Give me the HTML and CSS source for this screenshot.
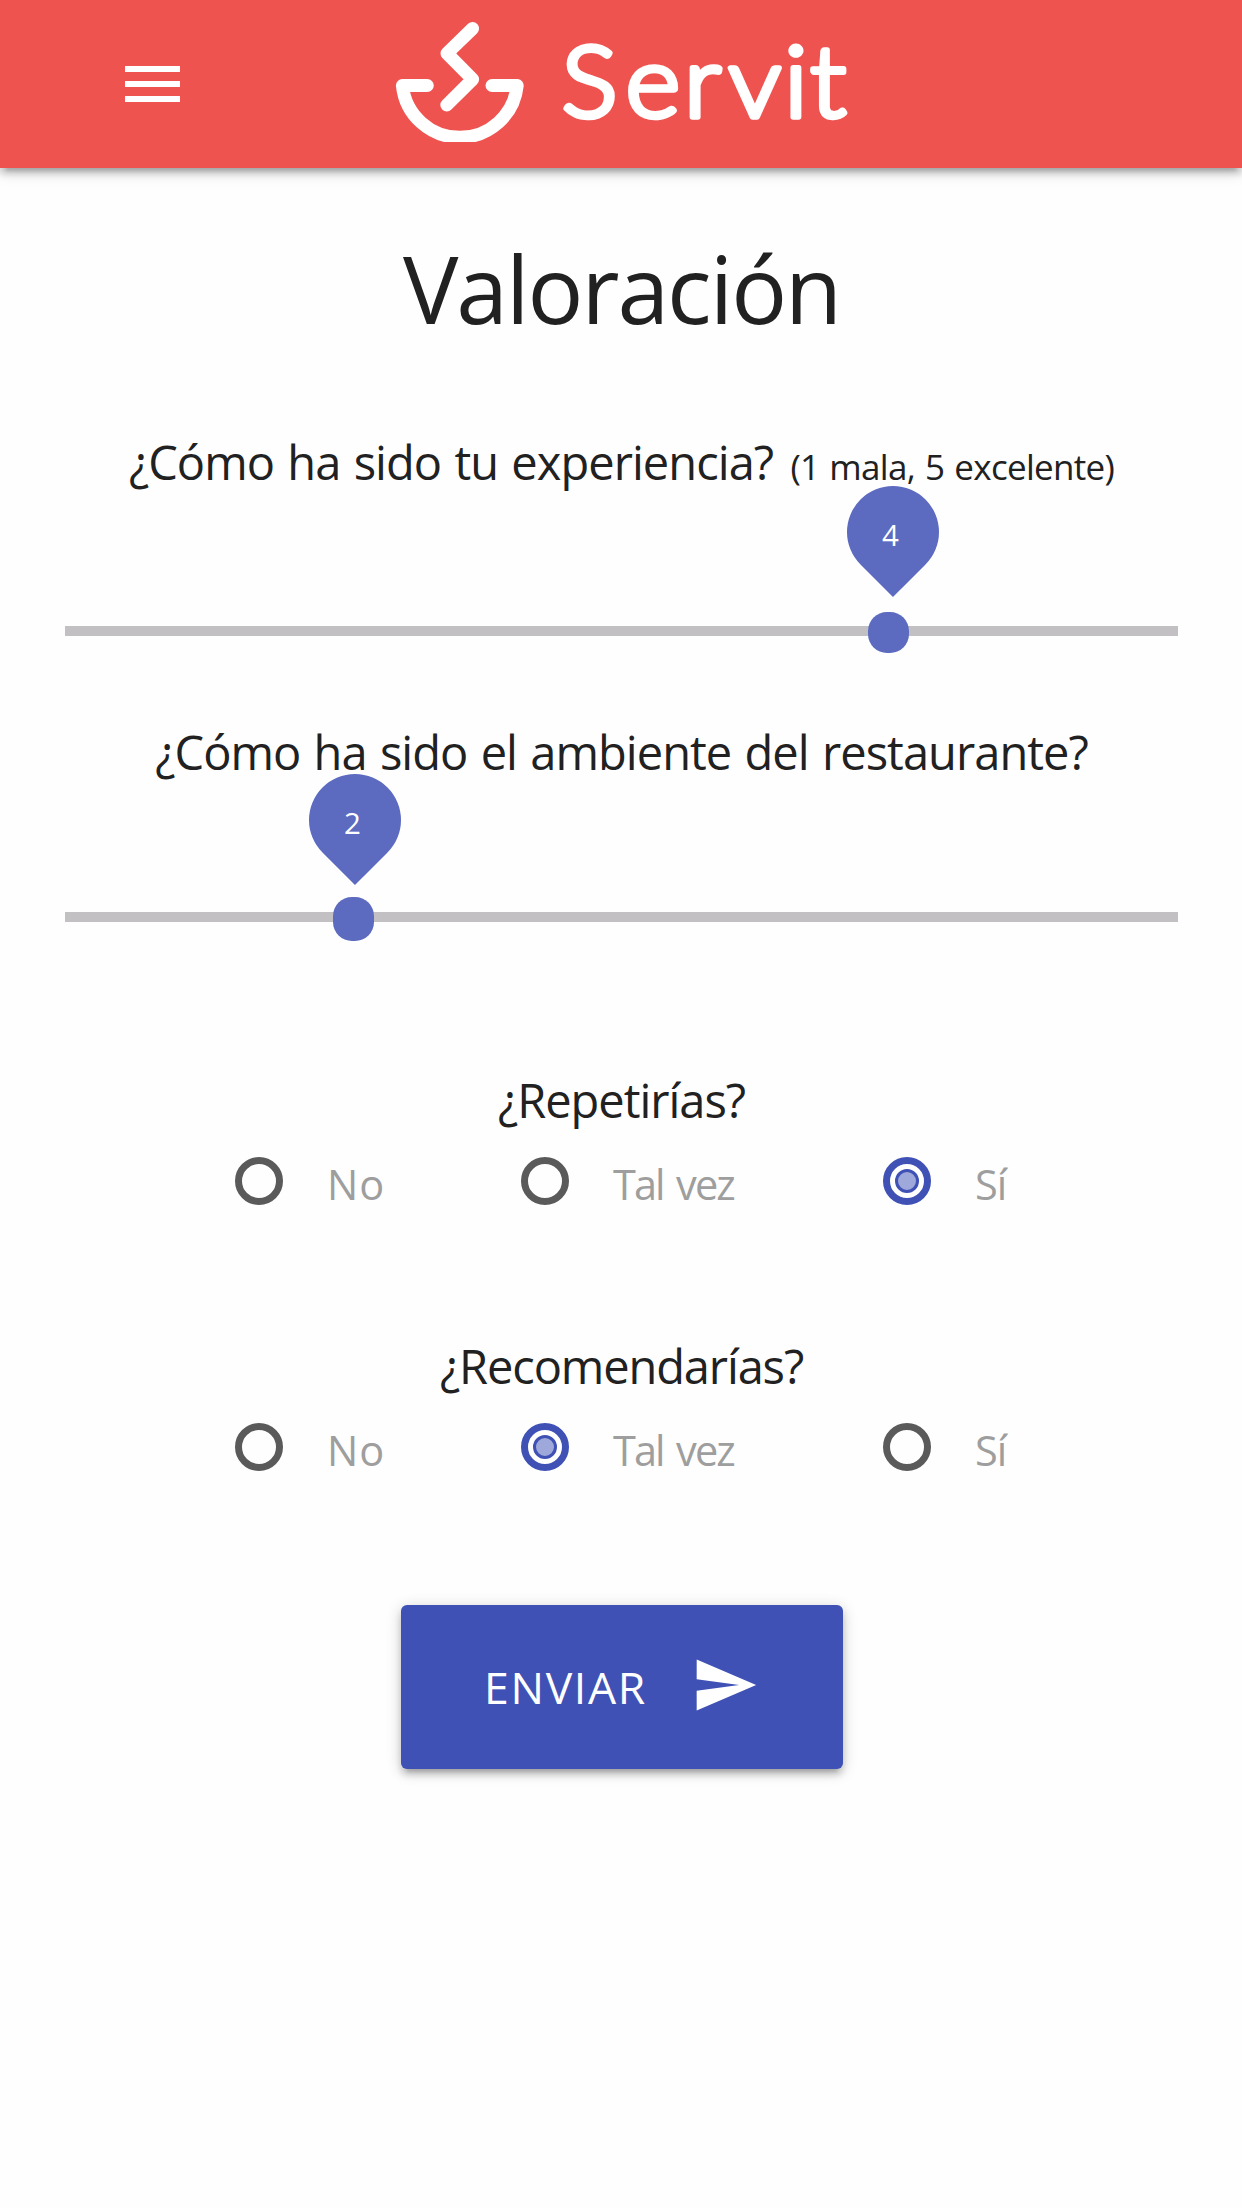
FILE: index.html
```html
<!DOCTYPE html>
<html lang="es">
<head>
<meta charset="utf-8">
<title>Servit - Valoración</title>
<link rel="stylesheet" href="styles.css">
</head>
<body>
<header class="navbar">
  <button class="menu" aria-label="Menú"><span class="bar"></span><span class="bar"></span><span class="bar"></span></button>
  <svg class="logo" width="460" height="120" viewBox="394 22 460 120" role="img" aria-label="Servit">
    <g class="bowl">
      <path d="M427.3 85.5H402.4A57.7 57.7 0 0 0 517.2 85.5H492"/>
      <path d="M472.6 28.5L447 53.4L472.6 79.3L446.8 105"/>
    </g>
    <text class="wordmark" transform="scale(1.06 1)" y="117" x="529.6 590.1 645.3 687.2 739.9 764.5">Servit</text>
  </svg>
</header>
<main class="page">
  <h1 class="title">Valoración</h1>

  <p class="question">¿Cómo ha sido tu experiencia? <small class="hint">(1 mala, 5 excelente)</small></p>
  <div class="slider">
    <div class="track"></div>
    <div class="thumb thumb-experience"></div>
    <div class="pin pin-experience"><span class="value">4</span></div>
  </div>

  <p class="question question-ambience">¿Cómo ha sido el ambiente del restaurante?</p>
  <div class="slider slider-ambience">
    <div class="track"></div>
    <div class="thumb thumb-ambience"></div>
    <div class="pin pin-ambience"><span class="value">2</span></div>
  </div>

  <p class="question question-repeat">¿Repetirías?</p>
  <div class="options">
    <label class="option"><span class="radio"></span><span class="label">No</span></label>
    <label class="option"><span class="radio"></span><span class="label label-maybe">Tal vez</span></label>
    <label class="option"><span class="radio checked"></span><span class="label label-yes">Sí</span></label>
  </div>

  <p class="question question-recommend">¿Recomendarías?</p>
  <div class="options">
    <label class="option"><span class="radio"></span><span class="label">No</span></label>
    <label class="option"><span class="radio checked"></span><span class="label label-maybe">Tal vez</span></label>
    <label class="option"><span class="radio"></span><span class="label label-yes">Sí</span></label>
  </div>

  <button class="submit">ENVIAR
    <svg class="send" width="68" height="68" viewBox="0 0 24 24"><path d="M2.01 21L23 12 2.01 3 2 10l15 2-15 2z"/></svg>
  </button>
</main>
</body>
</html>
```
FILE: styles.css
```css
* { box-sizing: border-box; }
body {
  margin: 0;
  min-height: 2208px;
  background: #fefefe;
  color: #212121;
  font-family: "Open Sans", "Noto Sans", sans-serif;
}
button { border: 0; padding: 0; font-family: inherit; }

.navbar {
  display: flex;
  align-items: flex-start;
  height: 168px;
  padding: 22px 0 0 125px;
  gap: 214px;
  background: #ef5350;
  box-shadow: 0 6px 6px 0 rgba(0,0,0,.14), 0 9px 3px -6px rgba(0,0,0,.12), 0 3px 15px 0 rgba(0,0,0,.2);
}
.menu {
  display: flex;
  flex-direction: column;
  gap: 9px;
  width: 55px;
  margin-top: 44px;
  background: none;
}
.bar { height: 6px; background: #fff; }
.bowl { fill: none; stroke: #fff; stroke-width: 13; stroke-linecap: round; stroke-linejoin: round; }
.wordmark {
  font-family: Lato, sans-serif;
  font-size: 99px;
  font-weight: 300;
  fill: #fff;
  stroke: #fff;
  stroke-width: 5.5px;
  stroke-linejoin: round;
}

.page { display: flex; flex-direction: column; padding: 60px 64px 0 65px; }
.title {
  margin: 0 0 84px;
  text-align: center;
  font-size: 93px;
  font-weight: 400;
  line-height: 120px;
  letter-spacing: -2px;
}
.question {
  margin: 0;
  text-align: center;
  font-size: 47px;
  line-height: 60px;
  letter-spacing: -.95px;
  word-spacing: 2px;
  white-space: nowrap;
}
.hint { margin-left: 4px; font-size: 35px; line-height: 1; letter-spacing: -.7px; word-spacing: 1.6px; }
.question-ambience { margin-top: 71px; }
.question-repeat { margin-top: 133px; letter-spacing: -1.02px; }
.question-recommend { margin-top: 126px; letter-spacing: -1.12px; }

.slider {
  position: relative;
  display: flex;
  align-items: center;
  height: 40px;
  margin-top: 119px;
}
.slider-ambience { margin-top: 115px; }
.track { flex: 1; height: 10px; background: #c2c0c2; }
.thumb { position: absolute; width: 41px; border-radius: 19px; background: #5c6bc0; }
.thumb-experience { left: 803px; top: 1px; height: 41px; }
.thumb-ambience { left: 268px; top: 0; height: 44px; }
.pin {
  position: absolute;
  width: 92px;
  height: 92px;
  border-radius: 50% 50% 50% 0;
  background: #5c6bc0;
  transform: rotate(-45deg);
}
.pin-experience { left: 782px; top: -125px; }
.pin-ambience { left: 244px; top: -123px; }
.value {
  display: block;
  transform: rotate(45deg) translate(-2.5px, 3px);
  text-align: center;
  color: #fff;
  font-size: 29.5px;
  line-height: 92px;
}

.options {
  display: grid;
  grid-template-columns: 286px 362px auto;
  margin-top: 27px;
  padding-left: 170px;
}
.option { display: flex; align-items: flex-start; gap: 44px; }
.radio { width: 48px; height: 48px; border: 7px solid #5a5a5a; border-radius: 50%; }
.radio.checked { display: grid; place-items: center; border-color: #3f51b5; }
.radio.checked::after {
  content: "";
  box-sizing: border-box;
  width: 24px;
  height: 24px;
  border: 3.5px solid #3f51b5;
  border-radius: 50%;
  background: #9fa8da;
}
.label { height: 53px; color: #9e9e9e; font-size: 41.5px; line-height: 55px; letter-spacing: 1px; }
.label-maybe { letter-spacing: -1.9px; word-spacing: 3.5px; }
.label-yes { letter-spacing: -1px; }

.submit {
  display: flex;
  align-items: center;
  gap: 44px;
  width: 442px;
  height: 164px;
  margin: 129px 0 0 336px;
  padding-left: 83px;
  border-radius: 6px;
  background: #3f51b5;
  color: #fff;
  font-size: 44.5px;
  line-height: 164px;
  letter-spacing: 1.7px;
  box-shadow: 0 6px 6px 0 rgba(0,0,0,.14), 0 9px 3px -6px rgba(0,0,0,.12), 0 3px 15px 0 rgba(0,0,0,.2);
}
.send { margin-top: -5px; fill: #fff; }
```
